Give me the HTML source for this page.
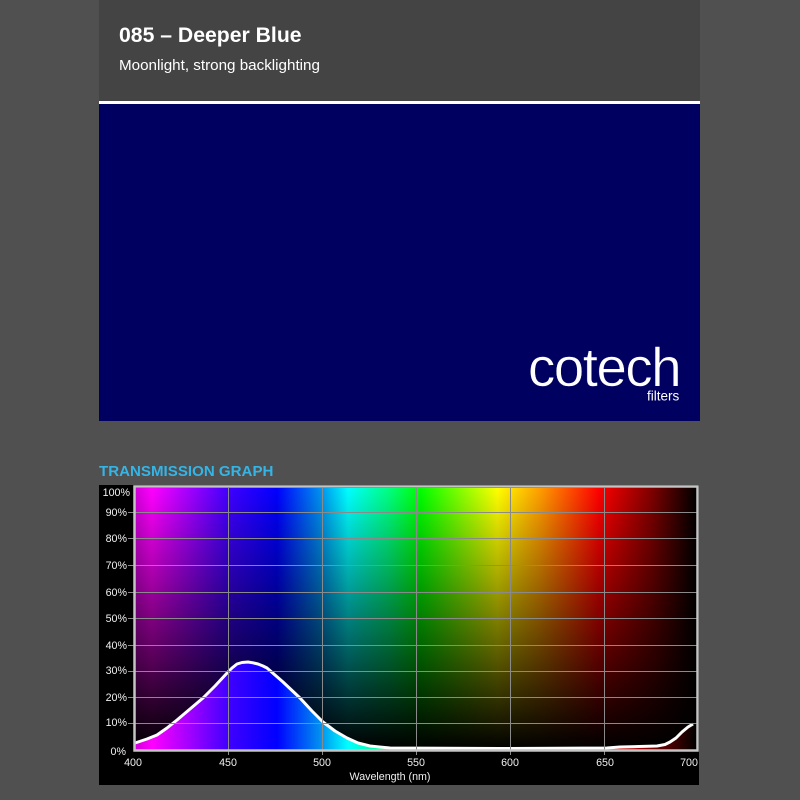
<!DOCTYPE html>
<html>
<head>
<meta charset="utf-8">
<style>
html,body{margin:0;padding:0;width:800px;height:800px;overflow:hidden;background:#505050;font-family:"Liberation Sans",sans-serif}
div{position:absolute}
</style>
</head>
<body>
<div style="left:99px;top:0;width:601px;height:101px;background:#444444"></div>
<div style="left:99px;top:101px;width:601px;height:3px;background:#fff"></div>
<div style="left:99px;top:104px;width:601px;height:317px;background:#000060"></div>
<div style="left:119px;top:23px;font-size:21.2px;line-height:26px;font-weight:bold;color:#fff;white-space:nowrap">085 – Deeper Blue</div>
<div style="left:119px;top:57px;font-size:15.2px;line-height:18px;color:#fff;white-space:nowrap">Moonlight, strong backlighting</div>
<div style="left:99px;top:463px;font-size:15.1px;line-height:18px;font-weight:bold;color:#35b4e6;white-space:nowrap">TRANSMISSION GRAPH</div>
<svg style="position:absolute;left:0;top:0" width="800" height="800" viewBox="0 0 800 800">
<defs>
<linearGradient id="sp" gradientUnits="userSpaceOnUse" x1="135" y1="0" x2="696" y2="0">
<stop offset="0" stop-color="#d000d8"/>
<stop offset="0.03" stop-color="#ff00ff"/>
<stop offset="0.167" stop-color="#4000ff"/>
<stop offset="0.253" stop-color="#0000ff"/>
<stop offset="0.33" stop-color="#0090f0"/>
<stop offset="0.38" stop-color="#00ffff"/>
<stop offset="0.453" stop-color="#00ff80"/>
<stop offset="0.509" stop-color="#00ff00"/>
<stop offset="0.646" stop-color="#ffff00"/>
<stop offset="0.72" stop-color="#ffa000"/>
<stop offset="0.827" stop-color="#ff0000"/>
<stop offset="0.92" stop-color="#800000"/>
<stop offset="1" stop-color="#000000"/>
</linearGradient>
<linearGradient id="fd" gradientUnits="userSpaceOnUse" x1="0" y1="488" x2="0" y2="750">
<stop offset="0" stop-color="#000" stop-opacity="0"/>
<stop offset="1" stop-color="#000" stop-opacity="1"/>
</linearGradient>
<clipPath id="under">
<path d="M135 750V743L147 739L157 735L167 728L177 720L190 709L203 698L215 686L228 672L232 668L237 664L242 662.500L248 662L253 662.800L258 664L263 666L267 668L275 675L283 682L300 698L312 711L323 722L335 731L347 738L358 743L370 746L390 748L500 749L607 748L620 747L657 746L665 744.500L670 742L676 738L682 732L688 727L693 724L696 724V750Z"/>
</clipPath>
</defs>
<rect x="99" y="485" width="600" height="300" fill="#000"/>
<rect x="135" y="488" width="561" height="262" fill="url(#sp)"/>
<rect x="135" y="488" width="561" height="262" fill="url(#fd)"/>
<rect x="135" y="488" width="561" height="262" fill="url(#sp)" clip-path="url(#under)"/>
<path d="M135 743L147 739L157 735L167 728L177 720L190 709L203 698L215 686L228 672L232 668L237 664L242 662.500L248 662L253 662.800L258 664L263 666L267 668L275 675L283 682L300 698L312 711L323 722L335 731L347 738L358 743L370 746L390 748L500 748.500L607 748L620 747L657 746L665 744.500L670 742L676 738L682 732L688 727L693 724" fill="none" stroke="#fff" stroke-width="3" stroke-linejoin="round"/>
<g stroke="#8a8a8a" stroke-width="1" fill="none">
<path d="M128 512.500H697M128 538.500H697M128 565.500H697M128 592.500H697M128 618.500H697M128 645.500H697M128 671.500H697M128 697.500H697M128 723.500H697"/>
<path d="M228.500 488V755M322.500 488V755M416.500 488V755M510.500 488V755M604.500 488V755"/>
</g>
<path d="M134.500 486.500H697.500V750.500H134.500Z" fill="none" stroke="#c4c4c4" stroke-width="2.500"/>
<g font-family="'Liberation Sans',sans-serif" font-size="10.700" fill="#f0f0f0">
<g text-anchor="end">
<text x="130" y="496">100%</text>
<text x="127" y="516">90%</text>
<text x="127" y="542">80%</text>
<text x="127" y="569">70%</text>
<text x="127" y="596">60%</text>
<text x="127" y="622">50%</text>
<text x="127" y="649">40%</text>
<text x="127" y="674">30%</text>
<text x="127" y="701">20%</text>
<text x="127" y="726">10%</text>
<text x="126" y="755">0%</text>
</g>
<g text-anchor="middle">
<text x="133" y="766">400</text>
<text x="228" y="766">450</text>
<text x="322" y="766">500</text>
<text x="416" y="766">550</text>
<text x="510" y="766">600</text>
<text x="605" y="766">650</text>
<text x="689" y="766">700</text>
<text x="390" y="780">Wavelength (nm)</text>
</g>
</g>
<text x="528" y="386" font-family="'Liberation Sans',sans-serif" font-size="54.500" letter-spacing="-1.400" fill="#fff" stroke="#000060" stroke-width="0.500">cotech</text>
<text x="647" y="400.500" font-family="'Liberation Sans',sans-serif" font-size="13.500" fill="#fff">filters</text>
</svg>
</body>
</html>
